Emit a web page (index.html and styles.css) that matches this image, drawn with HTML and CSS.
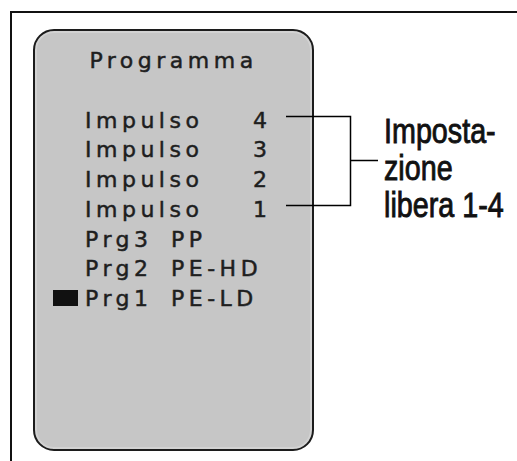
FILE: index.html
```html
<!DOCTYPE html>
<html lang="it">
<head>
    <meta charset="UTF-8">
    <meta name="viewport" content="width=device-width, initial-scale=1.0">
    <title>Programma</title>
    <link rel="stylesheet" href="styles.css">
</head>
<body>
    <div class="frame">
        <div class="display">
            <div class="title">Programma</div>
            <div class="rows">
                <div class="row"><span class="slot"></span><span class="label">Impulso</span><span class="num">4</span></div>
                <div class="row"><span class="slot"></span><span class="label">Impulso</span><span class="num">3</span></div>
                <div class="row"><span class="slot"></span><span class="label">Impulso</span><span class="num">2</span></div>
                <div class="row"><span class="slot"></span><span class="label">Impulso</span><span class="num">1</span></div>
                <div class="row"><span class="slot"></span><span class="prg">Prg3 PP</span></div>
                <div class="row"><span class="slot"></span><span class="prg">Prg2 PE-HD</span></div>
                <div class="row"><span class="slot"><span class="cursor"></span></span><span class="prg">Prg1 PE-LD</span></div>
            </div>
        </div>
        <div class="note"><span class="note-text">Imposta-<br>zione<br>libera 1-4</span></div>
    </div>
    <svg class="bracket" width="105" height="100" viewBox="0 0 105 100">
        <path d="M6 6.5 H70.5 V95.5 H6 M70.5 50.5 H98" fill="none" stroke="#000" stroke-width="1.5"/>
    </svg>
</body>
</html>
```
FILE: styles.css
```css
html, body {
    margin: 0;
    padding: 0;
    background: #fff;
    overflow: hidden;
}
body {
    position: relative;
    width: 517px;
    height: 461px;
}
.frame {
    margin: 11px 0 0 10px;
    width: 640px;
    height: 520px;
    border: 2px solid #111;
    display: flex;
    align-items: flex-start;
    box-sizing: border-box;
}
.display {
    flex: none;
    margin: 16px 0 0 21px;
    width: 281px;
    height: 422px;
    box-sizing: border-box;
    border: 2px solid #1c1c1c;
    border-radius: 21px;
    background: #c6c6c6;
    box-shadow: inset 0 0 0 2px #d2d2d2;
    padding-top: 15px;
    font-family: "DejaVu Sans", Verdana, sans-serif;
    font-size: 22px;
    line-height: 29.7px;
    letter-spacing: 4.5px;
    color: #1e1e1e;
    -webkit-text-stroke: 0.5px #1e1e1e;
}
.title {
    text-align: center;
    margin-bottom: 30px;
}
.rows {
    padding-left: 18px;
}
.row {
    display: flex;
    align-items: flex-start;
    white-space: pre;
}
.prg {
    word-spacing: 7px;
}
.slot {
    width: 32px;
    flex: none;
}
.cursor {
    display: block;
    width: 25px;
    height: 16px;
    margin-top: 6px;
    background: #111;
}
.label {
    width: 168px;
}
.note {
    margin: 99px 0 0 70px;
    width: 140px;
    white-space: nowrap;
}
.note-text {
    display: inline-block;
    transform: scaleX(0.82);
    transform-origin: left top;
    font-family: "Liberation Sans", Arial, sans-serif;
    font-size: 35px;
    line-height: 37px;
    color: #111;
    -webkit-text-stroke: 0.9px #111;
}
.bracket {
    position: absolute;
    left: 280px;
    top: 110px;
}
```
